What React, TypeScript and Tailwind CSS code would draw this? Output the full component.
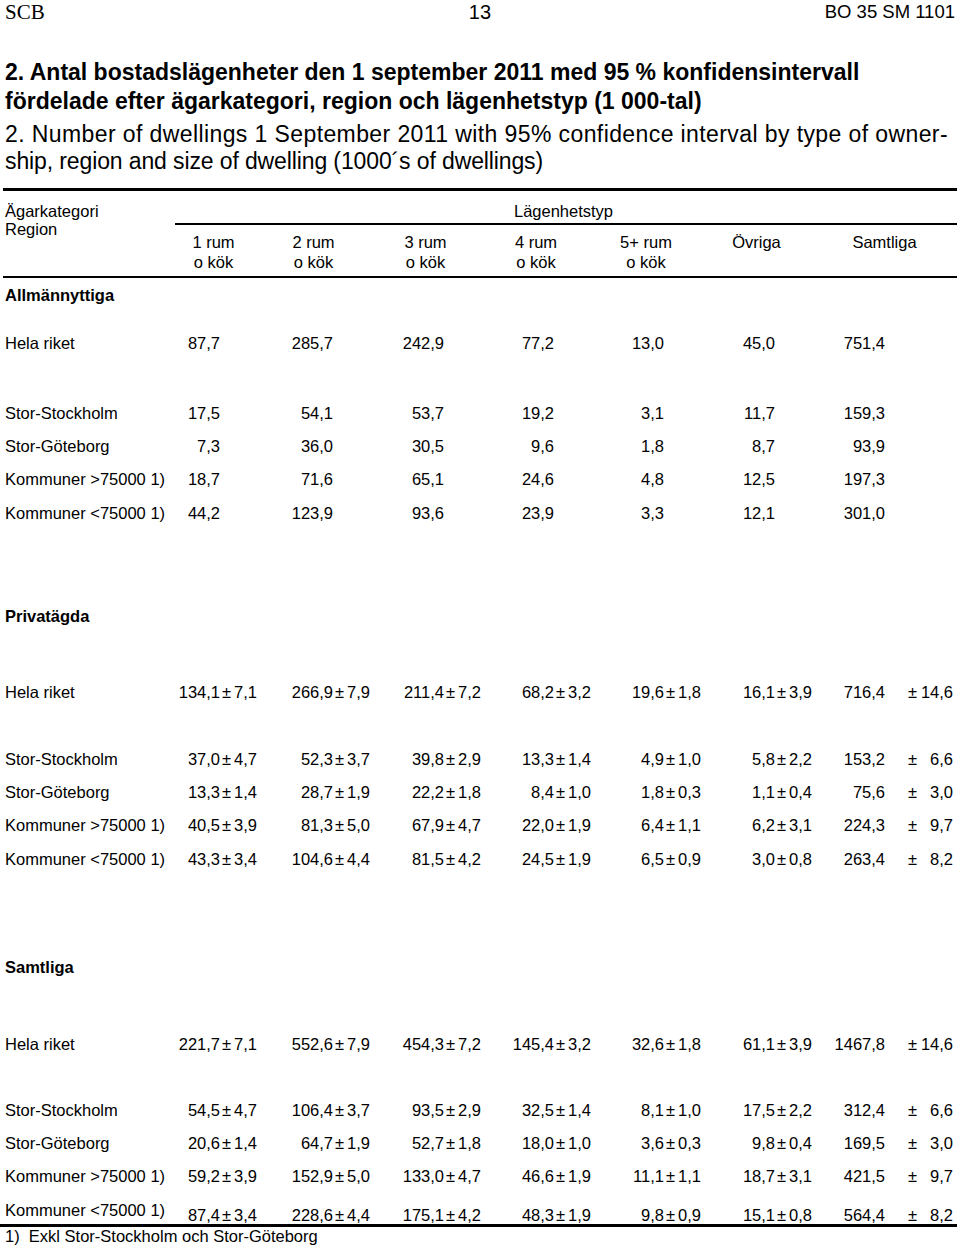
const SANS = "font-['Liberation_Sans',Arial,sans-serif]";

type Section = {
  title: string;
  rows: string[][];
  last?: boolean;
};

const LABELS = [
  "Hela riket",
  "Stor-Stockholm",
  "Stor-Göteborg",
  "Kommuner >75000 1)",
  "Kommuner <75000 1)",
];

const sections: Section[] = [
  {
    title: "Allmännyttiga",
    rows: [
      ["87,7", "285,7", "242,9", "77,2", "13,0", "45,0", "751,4"],
      ["17,5", "54,1", "53,7", "19,2", "3,1", "11,7", "159,3"],
      ["7,3", "36,0", "30,5", "9,6", "1,8", "8,7", "93,9"],
      ["18,7", "71,6", "65,1", "24,6", "4,8", "12,5", "197,3"],
      ["44,2", "123,9", "93,6", "23,9", "3,3", "12,1", "301,0"],
    ],
  },
  {
    title: "Privatägda",
    rows: [
      ["134,1|7,1", "266,9|7,9", "211,4|7,2", "68,2|3,2", "19,6|1,8", "16,1|3,9", "716,4|14,6"],
      ["37,0|4,7", "52,3|3,7", "39,8|2,9", "13,3|1,4", "4,9|1,0", "5,8|2,2", "153,2|6,6"],
      ["13,3|1,4", "28,7|1,9", "22,2|1,8", "8,4|1,0", "1,8|0,3", "1,1|0,4", "75,6|3,0"],
      ["40,5|3,9", "81,3|5,0", "67,9|4,7", "22,0|1,9", "6,4|1,1", "6,2|3,1", "224,3|9,7"],
      ["43,3|3,4", "104,6|4,4", "81,5|4,2", "24,5|1,9", "6,5|0,9", "3,0|0,8", "263,4|8,2"],
    ],
  },
  {
    title: "Samtliga",
    last: true,
    rows: [
      ["221,7|7,1", "552,6|7,9", "454,3|7,2", "145,4|3,2", "32,6|1,8", "61,1|3,9", "1467,8|14,6"],
      ["54,5|4,7", "106,4|3,7", "93,5|2,9", "32,5|1,4", "8,1|1,0", "17,5|2,2", "312,4|6,6"],
      ["20,6|1,4", "64,7|1,9", "52,7|1,8", "18,0|1,0", "3,6|0,3", "9,8|0,4", "169,5|3,0"],
      ["59,2|3,9", "152,9|5,0", "133,0|4,7", "46,6|1,9", "11,1|1,1", "18,7|3,1", "421,5|9,7"],
      ["87,4|3,4", "228,6|4,4", "175,1|4,2", "48,3|1,9", "9,8|0,9", "15,1|0,8", "564,4|8,2"],
    ],
  },
];

const GRID = "grid grid-cols-[167px_87px_113px_111px_110px_110px_111px_74px_71px]";

// sections start / row gaps (px) to follow the printed page
const gaps = [
  { title: "mt-[1px]", hela: "mt-[13.67px]", rest: "mt-[36.67px]" },
  { title: "mt-[70.67px]", hela: "mt-[41.67px]", rest: "mt-[33.67px]" },
  { title: "mt-[75.67px]", hela: "mt-[42.67px]", rest: "mt-[32.67px]" },
];

function ValueCells({ row, pad }: { row: string[]; pad?: string }) {
  const [tv, te] = row[6].split("|");
  return (
    <>
      {row.slice(0, 6).map((c, i) => {
        const [v, e] = c.split("|");
        return (
          <div key={i} className={`flex justify-end ${pad ?? ""}`}>
            <span>{v}</span>
            <span className="w-[37px] flex justify-between pl-[2px]">
              {e && (
                <>
                  <span>±</span>
                  <span>{e}</span>
                </>
              )}
            </span>
          </div>
        );
      })}
      <div className={`text-right pr-[1px] ${pad ?? ""}`}>{tv}</div>
      <div className={`flex justify-between pl-[22px] pr-[4px] ${pad ?? ""}`}>
        {te && (
          <>
            <span>±</span>
            <span>{te}</span>
          </>
        )}
      </div>
    </>
  );
}

export default function App() {
  return (
    <div className={`w-[960px] h-[1250px] bg-white text-black ${SANS} overflow-hidden`}>
      {/* page header */}
      <div className="h-[24px] grid grid-cols-3 items-center pl-[5px] pr-[5px] leading-[24px]">
        <span className="font-['Liberation_Serif','Times_New_Roman',serif] text-[21px]">SCB</span>
        <span className="text-[20px] text-center">13</span>
        <span className="text-[18.5px] text-right whitespace-nowrap">BO 35 SM 1101</span>
      </div>

      {/* table title */}
      <div className="pl-[5px] mt-[33.5px]">
        <div className="font-bold text-[23px] leading-[29px]">
          <div>2. Antal bostadslägenheter den 1 september 2011 med 95 % konfidensintervall</div>
          <div>fördelade efter ägarkategori, region och lägenhetstyp (1 000-tal)</div>
        </div>
        <div className="text-[23px] leading-[27px] mt-[5px] whitespace-nowrap">
          <div className="tracking-[0.4px]">2. Number of dwellings 1 September 2011 with 95% confidence interval by type of owner-</div>
          <div className="tracking-[-0.12px]">ship, region and size of dwelling (1000´s of dwellings)</div>
        </div>
      </div>

      <div className="ml-[3px] w-[954px] text-[16.5px] mt-[13.5px]">
        <div className="h-[3px] bg-black" />

        {/* column heads */}
        <div className={GRID}>
          <div className="pl-[2px] pt-[11px] leading-[18px]">
            <div>Ägarkategori</div>
            <div>Region</div>
          </div>
          <div className="col-span-8 pt-[11px] pb-[4px]">
            <div className="text-center leading-[18px]">Lägenhetstyp</div>
            <div className="ml-[5px] mt-[3px] h-[1.5px] bg-black" />
            <div className="grid grid-cols-[87px_113px_111px_110px_110px_111px_145px] mt-[7.5px] leading-[20px]">
              {["1 rum", "2 rum", "3 rum", "4 rum", "5+ rum"].map((h) => (
                <div key={h} className="text-center">
                  <div>{h}</div>
                  <div>o kök</div>
                </div>
              ))}
              <div className="text-center">Övriga</div>
              <div className="text-center">Samtliga</div>
            </div>
          </div>
        </div>
        <div className="h-[2px] bg-black" />

        {sections.map((s, si) => (
          <div key={s.title}>
            <div className={`h-[33.33px] flex items-center pl-[2px] font-bold ${gaps[si].title}`}>{s.title}</div>
            {s.rows.map((row, ri) => {
              const gap = ri === 0 ? gaps[si].hela : ri === 1 ? gaps[si].rest : "";
              const isLast = s.last && ri === s.rows.length - 1;
              if (isLast) {
                return (
                  <div key={ri} className={`${GRID} h-[31.67px] items-start leading-[20px]`}>
                    <div className="pl-[2px] pt-[7px] whitespace-nowrap">{LABELS[ri]}</div>
                    <ValueCells row={row} pad="pt-[12px]" />
                  </div>
                );
              }
              return (
                <div key={ri} className={`${GRID} h-[33.33px] items-center leading-[20px] ${gap}`}>
                  <div className="pl-[2px] whitespace-nowrap">{LABELS[ri]}</div>
                  <ValueCells row={row} />
                </div>
              );
            })}
          </div>
        ))}

        <div className="h-[3px] bg-black -ml-[3px] w-[957px]" />
        <div className="pl-[2px] leading-[18px]">1)&nbsp; Exkl Stor-Stockholm och Stor-Göteborg</div>
      </div>
    </div>
  );
}
